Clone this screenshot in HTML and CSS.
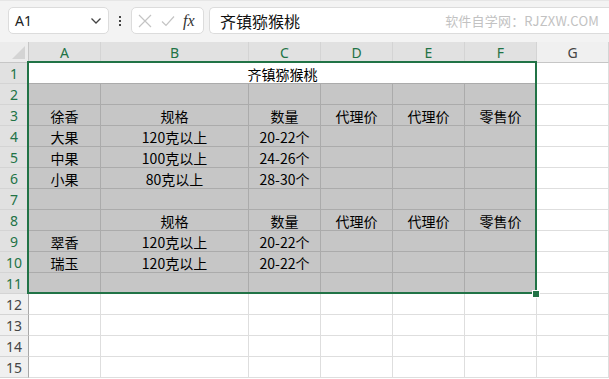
FILE: index.html
```html
<!DOCTYPE html>
<html lang="zh-CN">
<head>
    <meta charset="UTF-8">
    <meta name="viewport" content="width=device-width, initial-scale=1.0">
    <title>齐镇猕猴桃</title>
    <link rel="stylesheet" href="styles.css">
</head>
<body>
    <div class="toolbar">
        <div class="name-box">
            <span>A1</span>
            <svg class="chevron" width="12" height="8" viewBox="0 0 12 8"><path d="M1.5 1.5 L6 6 L10.5 1.5" fill="none" stroke="#444" stroke-width="1.3"/></svg>
        </div>
        <div class="dots"><i></i><i></i><i></i></div>
        <div class="fx-buttons">
            <svg width="14" height="14" viewBox="0 0 14 14"><path d="M1 1 L13 13 M13 1 L1 13" stroke="#c4c4c4" stroke-width="1.2"/></svg>
            <svg width="14" height="14" viewBox="0 0 14 14"><path d="M1 7.5 L5 11.5 L13 2.5" fill="none" stroke="#c4c4c4" stroke-width="1.2"/></svg>
            <span class="fx">fx</span>
        </div>
        <div class="formula">
            <span class="formula-text">齐镇猕猴桃</span>
            <span class="watermark">软件自学网：RJZXW.COM</span>
        </div>
    </div>

    <div class="sheet">
        <div class="grid" id="grid"></div>
        <div class="selection"></div>
        <div class="fill-handle"></div>
    </div>

    <script>
        // rows 2..11 of the sheet, columns A..F
        const data = [
            ['', '', '', '', '', ''],
            ['徐香', '规格', '数量', '代理价', '代理价', '零售价'],
            ['大果', '120克以上', '20-22个', '', '', ''],
            ['中果', '100克以上', '24-26个', '', '', ''],
            ['小果', '80克以上', '28-30个', '', '', ''],
            ['', '', '', '', '', ''],
            ['', '规格', '数量', '代理价', '代理价', '零售价'],
            ['翠香', '120克以上', '20-22个', '', '', ''],
            ['瑞玉', '120克以上', '20-22个', '', '', ''],
            ['', '', '', '', '', '']
        ];
        const cols = ['A', 'B', 'C', 'D', 'E', 'F', 'G'];
        const grid = document.getElementById('grid');

        function add(cls, text) {
            const el = document.createElement('div');
            el.className = cls;
            el.textContent = text || '';
            grid.appendChild(el);
            return el;
        }

        // header row
        add('corner');
        cols.forEach(function(c, i) {
            add(i < 6 ? 'colhead sel' : 'colhead', c);
        });

        // row 1 - merged title
        add('rowhead sel', '1');
        add('cell title', '齐镇猕猴桃');
        add('cell');

        // rows 2..11
        data.forEach(function(row, r) {
            add('rowhead sel', String(r + 2));
            row.forEach(function(v) {
                add('cell gray', v);
            });
            add('cell');
        });

        // rows 12..15
        for (let r = 12; r <= 15; r++) {
            add('rowhead', String(r));
            for (let c = 0; c < 7; c++) add('cell');
        }
    </script>
</body>
</html>
```

FILE: styles.css
```css
body {
    margin: 0;
    width: 609px;
    height: 379px;
    overflow: hidden;
    background: #ffffff;
    font-family: "Noto Sans", "Noto Sans CJK SC", sans-serif;
    color: #000;
}

/* top bar with name box and formula bar */
.toolbar {
    height: 42px;
    box-sizing: border-box;
    background: #f3f3f3;
    border-top: 1px solid #e6e6e6;
    display: flex;
    align-items: flex-start;
    padding-top: 6px;
    padding-left: 8px;
}

.name-box {
    width: 101px;
    height: 27px;
    box-sizing: border-box;
    background: #fff;
    border: 1px solid #dcdcdc;
    border-radius: 5px;
    display: flex;
    align-items: center;
    justify-content: space-between;
    padding: 0 6px 0 6px;
    font-size: 14px;
    color: #222;
}

.dots {
    width: 22px;
    display: flex;
    flex-direction: column;
    align-items: center;
    gap: 2px;
    padding-top: 9px;
}

.dots i {
    display: block;
    width: 2px;
    height: 2px;
    background: #444;
}

.fx-buttons {
    width: 73px;
    height: 27px;
    box-sizing: border-box;
    background: #fff;
    border: 1px solid #dcdcdc;
    border-radius: 5px;
    display: flex;
    align-items: center;
    gap: 9px;
    padding-left: 6px;
}

.fx {
    font-family: "Liberation Serif", "DejaVu Serif", serif;
    font-style: italic;
    font-size: 16px;
    color: #333;
    margin-left: -1px;
}

.formula {
    margin-left: 5px;
    flex: 1;
    height: 27px;
    box-sizing: border-box;
    background: #fff;
    border: 1px solid #dcdcdc;
    border-right: none;
    border-radius: 5px 0 0 5px;
    display: flex;
    align-items: center;
    justify-content: space-between;
    padding-left: 10px;
    padding-right: 10px;
}

.formula-text {
    font-family: "Noto Sans CJK SC", sans-serif;
    font-size: 16px;
    color: #111;
}

.watermark {
    font-family: "Noto Sans CJK SC", sans-serif;
    font-size: 13px;
    color: #c2c2c2;
    letter-spacing: 0.2px;
}

/* sheet */
.sheet {
    position: relative;
}

.grid {
    display: grid;
    grid-template-columns: 29px 72px 148px 72px 72px 72px 72px 72px;
    grid-auto-rows: 21px;
}

.grid > div {
    box-sizing: border-box;
    border-right: 1px solid #dedede;
    border-bottom: 1px solid #dedede;
    display: flex;
    align-items: center;
    justify-content: center;
    white-space: nowrap;
}

.corner {
    background: #ececec;
    position: relative;
    border-color: #c6c6c6 !important;
}

.corner::after {
    content: "";
    position: absolute;
    right: 3px;
    bottom: 3px;
    border-style: solid;
    border-width: 0 0 13px 13px;
    border-color: transparent transparent #d4d4d4 transparent;
}

.colhead {
    background: #f0f0f0;
    font-size: 14px;
    color: #444;
    border-bottom-color: #c6c6c6 !important;
    border-right-color: #d4d4d4 !important;
}

.colhead.sel {
    background: #e1e1e1;
    color: #217346;
}

.rowhead {
    background: #f0f0f0;
    font-size: 14px;
    color: #444;
    border-right-color: #a8a8a8 !important;
    border-bottom-color: #d4d4d4 !important;
}

.rowhead.sel {
    background: #e1e1e1;
    color: #217346;
}

.cell {
    font-family: "Noto Sans CJK SC", sans-serif;
    font-size: 14px;
    padding-top: 1px;
}

.cell.title {
    grid-column: span 6;
    background: #fff;
    border-right-color: #ababab !important;
    border-bottom-color: #ababab !important;
}

.cell.gray {
    background: #c6c6c6;
    border-right-color: #ababab;
    border-bottom-color: #ababab;
}

/* active selection A1:F11 */
.selection {
    position: absolute;
    left: 27px;
    top: 19px;
    width: 510px;
    height: 233px;
    box-sizing: border-box;
    border: 2px solid #217346;
    pointer-events: none;
}

.fill-handle {
    position: absolute;
    left: 532px;
    top: 248px;
    width: 6px;
    height: 6px;
    background: #217346;
    border: 1px solid #fff;
}
```
